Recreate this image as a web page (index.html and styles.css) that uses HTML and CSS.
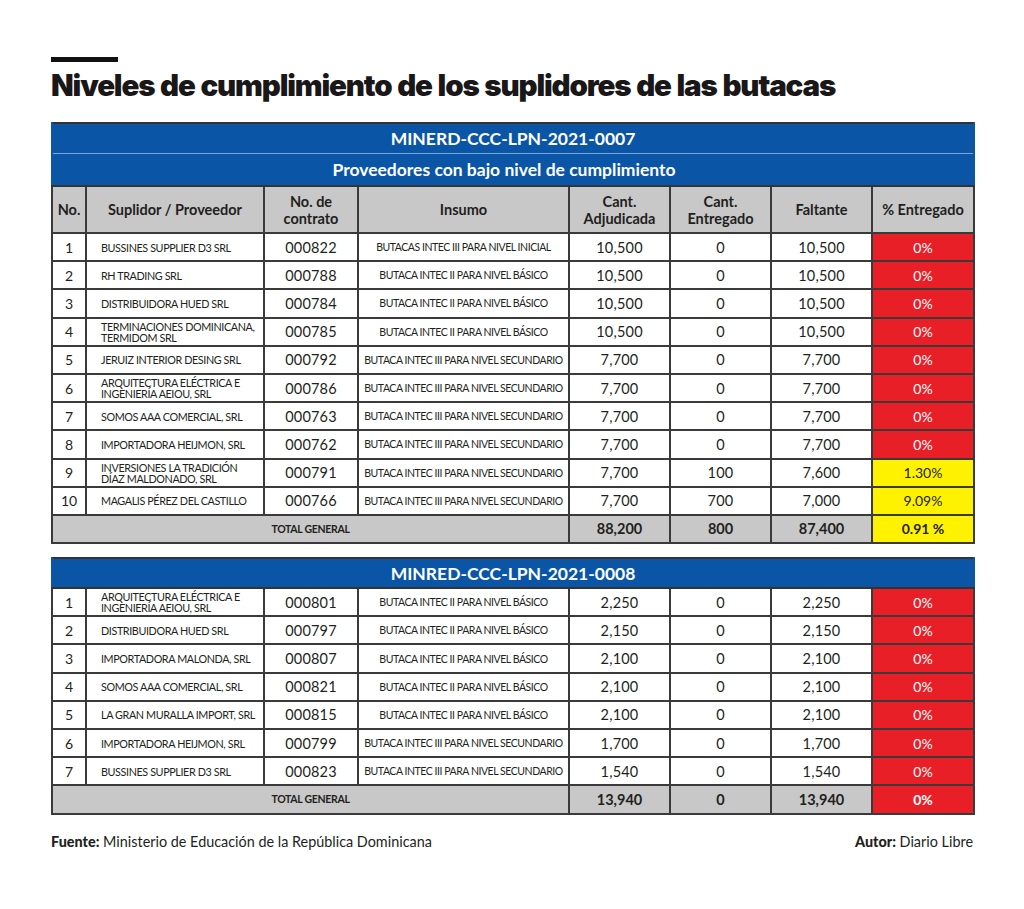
FILE: index.html
```html
<!DOCTYPE html>
<html lang="es">
<head>
<meta charset="utf-8">
<title>Niveles de cumplimiento</title>
<link rel="stylesheet" href="styles.css">
</head>
<body>
<div class="page">
  <div class="rule"></div>
  <h1 class="title">Niveles de cumplimiento de los suplidores de las butacas</h1>

  <table class="grid t1">
    <colgroup>
      <col class="c-no"><col class="c-sup"><col class="c-con"><col class="c-ins"><col class="c-num"><col class="c-num"><col class="c-num"><col class="c-pct">
    </colgroup>
    <tr class="blue b1"><td colspan="8">MINERD-CCC-LPN-2021-0007</td></tr>
    <tr class="blue b2"><td colspan="8">Proveedores con bajo nivel de cumplimiento</td></tr>
    <tr class="head">
      <td>No.</td><td>Suplidor / Proveedor</td><td>No. de<br>contrato</td><td>Insumo</td><td>Cant.<br>Adjudicada</td><td>Cant.<br>Entregado</td><td>Faltante</td><td>% Entregado</td>
    </tr>
    <tr><td class="n">1</td><td class="s">BUSSINES SUPPLIER D3 SRL</td><td class="k">000822</td><td class="i">BUTACAS INTEC III PARA NIVEL INICIAL</td><td class="k">10,500</td><td class="k">0</td><td class="k">10,500</td><td class="red">0%</td></tr>
    <tr><td class="n">2</td><td class="s">RH TRADING SRL</td><td class="k">000788</td><td class="i">BUTACA INTEC II PARA NIVEL BÁSICO</td><td class="k">10,500</td><td class="k">0</td><td class="k">10,500</td><td class="red">0%</td></tr>
    <tr><td class="n">3</td><td class="s">DISTRIBUIDORA HUED SRL</td><td class="k">000784</td><td class="i">BUTACA INTEC II PARA NIVEL BÁSICO</td><td class="k">10,500</td><td class="k">0</td><td class="k">10,500</td><td class="red">0%</td></tr>
    <tr><td class="n">4</td><td class="s">TERMINACIONES DOMINICANA,<br>TERMIDOM SRL</td><td class="k">000785</td><td class="i">BUTACA INTEC II PARA NIVEL BÁSICO</td><td class="k">10,500</td><td class="k">0</td><td class="k">10,500</td><td class="red">0%</td></tr>
    <tr><td class="n">5</td><td class="s">JERUIZ INTERIOR DESING SRL</td><td class="k">000792</td><td class="i">BUTACA INTEC III PARA NIVEL SECUNDARIO</td><td class="k">7,700</td><td class="k">0</td><td class="k">7,700</td><td class="red">0%</td></tr>
    <tr><td class="n">6</td><td class="s">ARQUITECTURA ELÉCTRICA E<br>INGENIERÍA AEIOU, SRL</td><td class="k">000786</td><td class="i">BUTACA INTEC III PARA NIVEL SECUNDARIO</td><td class="k">7,700</td><td class="k">0</td><td class="k">7,700</td><td class="red">0%</td></tr>
    <tr><td class="n">7</td><td class="s">SOMOS AAA COMERCIAL, SRL</td><td class="k">000763</td><td class="i">BUTACA INTEC III PARA NIVEL SECUNDARIO</td><td class="k">7,700</td><td class="k">0</td><td class="k">7,700</td><td class="red">0%</td></tr>
    <tr><td class="n">8</td><td class="s">IMPORTADORA HEIJMON, SRL</td><td class="k">000762</td><td class="i">BUTACA INTEC III PARA NIVEL SECUNDARIO</td><td class="k">7,700</td><td class="k">0</td><td class="k">7,700</td><td class="red">0%</td></tr>
    <tr><td class="n">9</td><td class="s">INVERSIONES LA TRADICIÓN<br>DÍAZ MALDONADO, SRL</td><td class="k">000791</td><td class="i">BUTACA INTEC III PARA NIVEL SECUNDARIO</td><td class="k">7,700</td><td class="k">100</td><td class="k">7,600</td><td class="yel">1.30%</td></tr>
    <tr><td class="n">10</td><td class="s">MAGALIS PÉREZ DEL CASTILLO</td><td class="k">000766</td><td class="i">BUTACA INTEC III PARA NIVEL SECUNDARIO</td><td class="k">7,700</td><td class="k">700</td><td class="k">7,000</td><td class="yel">9.09%</td></tr>
    <tr class="total"><td colspan="4" class="tl">TOTAL GENERAL</td><td>88,200</td><td>800</td><td>87,400</td><td class="yel">0.91 %</td></tr>
  </table>

  <table class="grid t2">
    <colgroup>
      <col class="c-no"><col class="c-sup"><col class="c-con"><col class="c-ins"><col class="c-num"><col class="c-num"><col class="c-num"><col class="c-pct">
    </colgroup>
    <tr class="blue b1 solo"><td colspan="8">MINRED-CCC-LPN-2021-0008</td></tr>
    <tr><td class="n">1</td><td class="s">ARQUITECTURA ELÉCTRICA E<br>INGENIERÍA AEIOU, SRL</td><td class="k">000801</td><td class="i">BUTACA INTEC II PARA NIVEL BÁSICO</td><td class="k">2,250</td><td class="k">0</td><td class="k">2,250</td><td class="red">0%</td></tr>
    <tr><td class="n">2</td><td class="s">DISTRIBUIDORA HUED SRL</td><td class="k">000797</td><td class="i">BUTACA INTEC II PARA NIVEL BÁSICO</td><td class="k">2,150</td><td class="k">0</td><td class="k">2,150</td><td class="red">0%</td></tr>
    <tr><td class="n">3</td><td class="s">IMPORTADORA MALONDA, SRL</td><td class="k">000807</td><td class="i">BUTACA INTEC II PARA NIVEL BÁSICO</td><td class="k">2,100</td><td class="k">0</td><td class="k">2,100</td><td class="red">0%</td></tr>
    <tr><td class="n">4</td><td class="s">SOMOS AAA COMERCIAL, SRL</td><td class="k">000821</td><td class="i">BUTACA INTEC II PARA NIVEL BÁSICO</td><td class="k">2,100</td><td class="k">0</td><td class="k">2,100</td><td class="red">0%</td></tr>
    <tr><td class="n">5</td><td class="s">LA GRAN MURALLA IMPORT, SRL</td><td class="k">000815</td><td class="i">BUTACA INTEC II PARA NIVEL BÁSICO</td><td class="k">2,100</td><td class="k">0</td><td class="k">2,100</td><td class="red">0%</td></tr>
    <tr><td class="n">6</td><td class="s">IMPORTADORA HEIJMON, SRL</td><td class="k">000799</td><td class="i">BUTACA INTEC III PARA NIVEL SECUNDARIO</td><td class="k">1,700</td><td class="k">0</td><td class="k">1,700</td><td class="red">0%</td></tr>
    <tr><td class="n">7</td><td class="s">BUSSINES SUPPLIER D3 SRL</td><td class="k">000823</td><td class="i">BUTACA INTEC III PARA NIVEL SECUNDARIO</td><td class="k">1,540</td><td class="k">0</td><td class="k">1,540</td><td class="red">0%</td></tr>
    <tr class="total"><td colspan="4" class="tl">TOTAL GENERAL</td><td>13,940</td><td>0</td><td>13,940</td><td class="red">0%</td></tr>
  </table>

  <div class="foot">
    <p><b>Fuente:</b> Ministerio de Educación de la República Dominicana</p>
    <p><b>Autor:</b> Diario Libre</p>
  </div>
</div>
</body>
</html>
```

FILE: styles.css
```css
html, body {
  margin: 0;
  padding: 0;
  background: #ffffff;
}
body {
  font-family: "Lato", "Open Sans", sans-serif;
  color: #231f20;
}
.page {
  width: 922px;
  padding: 57px 0 0 51px;
}
.rule {
  width: 67px;
  height: 5px;
  background: #111;
}
.title {
  margin: 4px 0 0 0;
  font-family: "Inter", "Lato", sans-serif;
  font-weight: 900;
  font-size: 29.5px;
  line-height: 38px;
  letter-spacing: -1.15px;
  word-spacing: 1px;
  color: #1a1718;
  white-space: nowrap;
}
.grid {
  width: 922px;
  table-layout: fixed;
  border-collapse: collapse;
  border: 2px solid #333;
  margin-top: 18px;
}
.t2 { margin-top: 13px; }
.c-no { width: 34px; }
.c-sup { width: 178px; }
.c-con { width: 94px; }
.c-ins { width: 211px; }
.c-num { width: 101px; }
.c-pct { width: 102px; }
.grid td {
  border: 2px solid #3a3a3a;
  padding: 0;
  height: 26.2px;
  text-align: center;
  vertical-align: middle;
}
.blue td {
  background: #0b55a6;
  color: #fff;
  font-weight: 700;
  border-color: #0b55a6;
  border-top: 0;
}
.b1 td {
  height: 29px;
  font-size: 17.5px;
  border-bottom: 1px solid #7aa6db;
}
.b2 td {
  height: 31px;
  font-size: 17.5px;
  border-top: 1px solid #7aa6db;
  border-bottom-color: #333;
}
.b2 td { padding-right: 18px; }
.solo td {
  border-bottom: 2px solid #333;
  height: 28px;
}
.head td {
  background: #c8c8c8;
  font-weight: 700;
  font-size: 14.5px;
  line-height: 17px;
  height: 45px;
  color: #231f20;
}
.grid .n {
  font-size: 14px;
  font-weight: 400;
}
.grid .s {
  text-align: left;
  padding-left: 14px;
  font-size: 10.8px;
  line-height: 11px;
  letter-spacing: -0.4px;
  font-weight: 400;
}
.grid .i {
  font-size: 10.5px;
  letter-spacing: -0.45px;
  font-weight: 400;
}
.grid .k {
  font-size: 14.5px;
  font-weight: 400;
  letter-spacing: 0.2px;
}
.grid .red {
  background: #e81f27;
  color: #fff;
  font-size: 14px;
  font-weight: 400;
}
.grid .yel {
  background: #fff200;
  color: #231f20;
  font-size: 14px;
  font-weight: 400;
}
.total td {
  background: #c8c8c8;
  font-weight: 700;
  font-size: 14.5px;
}
.total td.tl {
  font-size: 10.5px;
  letter-spacing: -0.3px;
}
.total td.yel, .total td.red {
  font-weight: 700;
}
.foot {
  display: flex;
  justify-content: space-between;
  margin-top: 18px;
  font-size: 14.4px;
}
.foot p { margin: 0; }
.foot b { font-weight: 900; }
```
